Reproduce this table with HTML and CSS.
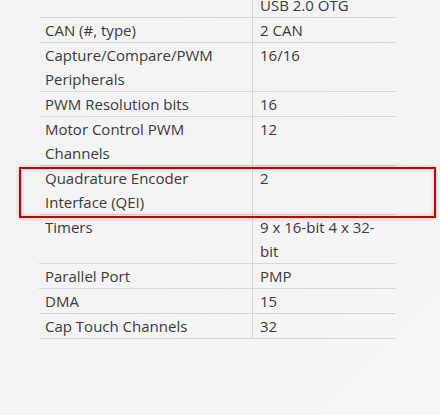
FILE: index.html
```html
<!DOCTYPE html>
<html>
<head>
<meta charset="utf-8">
<link rel="stylesheet" href="styles.css">
</head>
<body>
<div class="page">
  <table class="specs">
    <tbody>
      <tr><td class="k"></td><td class="v">USB 2.0 OTG</td></tr>
      <tr><td class="k">CAN (#, type)</td><td class="v">2 CAN</td></tr>
      <tr><td class="k">Capture/Compare/PWM Peripherals</td><td class="v">16/16</td></tr>
      <tr><td class="k">PWM Resolution bits</td><td class="v">16</td></tr>
      <tr><td class="k">Motor Control PWM Channels</td><td class="v">12</td></tr>
      <tr><td class="k">Quadrature Encoder Interface (QEI)</td><td class="v">2</td></tr>
      <tr><td class="k">Timers</td><td class="v">9 x 16-bit 4 x 32-bit</td></tr>
      <tr><td class="k">Parallel Port</td><td class="v">PMP</td></tr>
      <tr><td class="k">DMA</td><td class="v">15</td></tr>
      <tr><td class="k">Cap Touch Channels</td><td class="v">32</td></tr>
    </tbody>
  </table>
  <div class="highlight"></div>
</div>
</body>
</html>
```
FILE: styles.css
```css
html, body {
  margin: 0;
  padding: 0;
}
body {
  background: #f4f4f4;
  font-family: "Open Sans", "Liberation Sans", sans-serif;
  font-size: 15px;
  color: #3a3a3a;
}
.page {
  position: relative;
  width: 440px;
  height: 415px;
  overflow: hidden;
  background: linear-gradient(135deg, #f3f3f3 0%, #f4f4f4 60%, #f7f7f7 100%);
}
.specs {
  border-collapse: collapse;
  width: 357px;
  margin: -7px 0 0 39px;
  table-layout: fixed;
}
.specs td {
  padding: 0 6px 0 6px;
  line-height: 24px;
  vertical-align: top;
  border-bottom: 1px solid #d6d6d6;
}
.specs td.k {
  width: 201px;
  border-right: 1px solid #d6d6d6;
}
.specs td.v {
  padding-left: 7px;
}
.highlight {
  position: absolute;
  left: 19px;
  top: 167px;
  width: 413px;
  height: 47px;
  border: 2px solid #c00000;
  box-shadow: 0 0 4px rgba(0,0,0,0.25), inset 0 0 4px rgba(0,0,0,0.2);
}
```
